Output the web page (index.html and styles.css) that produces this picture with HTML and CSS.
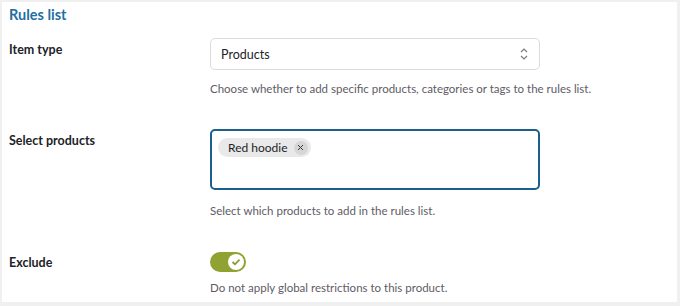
FILE: index.html
```html
<!DOCTYPE html>
<html>
<head>
<meta charset="UTF-8">
<title>Rules list</title>
<link rel="stylesheet" href="styles.css">
</head>
<body>
<div class="panel">
<h2 class="title">Rules list</h2>

<div class="row row-type">
<div class="label">Item type</div>
<div class="field">
<div class="select">
<span>Products</span>
<svg class="arrows" width="10" height="14" viewBox="0 0 10 14"><path d="M2 5 L5 2 L8 5 M2 9 L5 12 L8 9" fill="none" stroke="#7a7a7a" stroke-width="1.2"/></svg>
</div>
<p class="desc">Choose whether to add specific products, categories or tags to the rules list.</p>
</div>
</div>

<div class="row row-products">
<div class="label">Select products</div>
<div class="field">
<div class="multi">
<span class="chip">Red hoodie <span class="chip-x"><svg width="7" height="7" viewBox="0 0 7 7"><path d="M1 1 L6 6 M6 1 L1 6" stroke="#3a3a3a" stroke-width="1"/></svg></span></span>
</div>
<p class="desc">Select which products to add in the rules list.</p>
</div>
</div>

<div class="row row-exclude">
<div class="label">Exclude</div>
<div class="field">
<div class="toggle"><span class="knob"><svg width="10" height="8" viewBox="0 0 10 8"><path d="M1.5 4 L4 6.3 L8.5 1.7" fill="none" stroke="#8a9b2e" stroke-width="1.8"/></svg></span></div>
<p class="desc">Do not apply global restrictions to this product.</p>
</div>
</div>
</div>
</body>
</html>
```
FILE: styles.css
```css
html, body{
    margin:0;
    padding:0;
}
body{
    background:#f0f0f1;
    font-family:Lato, "Noto Sans", sans-serif;
    color:#1d2327;
    width:680px;
    height:306px;
    overflow:hidden;
}
.panel{
    background:#fff;
    margin:2px 0 0 2px;
    width:675px;
    height:300px;
    box-sizing:border-box;
    padding:3px 7px 0 7px;
}
.title{
    margin:0;
    font-size:14.5px;
    font-weight:700;
    color:#1f6fa3;
    line-height:20px;
}
.row{
    display:flex;
}
.label{
    width:201px;
    font-size:12.5px;
    font-weight:700;
    line-height:18px;
}
.field{
    width:330px;
}
.row-type{
    margin-top:13px;
}
.row-type .label{
    margin-top:3px;
}
.select{
    height:32px;
    border:1px solid #dcdcde;
    border-radius:5px;
    box-sizing:border-box;
    display:flex;
    align-items:center;
    justify-content:space-between;
    padding:0 10px 0 10px;
    font-size:12.5px;
}
.desc{
    margin:10px 0 0 0;
    font-size:11.5px;
    line-height:17px;
    color:#615b66;
    white-space:nowrap;
}
.row-products{
    margin-top:32px;
}
.row-products .label{
    margin-top:3px;
}
.multi{
    height:61px;
    border:2px solid #1b5f8c;
    border-radius:5px;
    box-sizing:border-box;
    padding:5px 6px;
}
.chip{
    display:inline-flex;
    align-items:center;
    height:19px;
    background:#e9e9ea;
    border-radius:10px;
    padding:0 3px 0 10px;
    font-size:12px;
    color:#1d2327;
}
.chip-x{
    display:inline-flex;
    align-items:center;
    justify-content:center;
    width:14px;
    height:14px;
    border-radius:50%;
    background:#d6d6d8;
    margin-left:6px;
}
.row-products .desc{
    margin-top:12px;
}
.row-exclude{
    margin-top:33px;
}
.row-exclude .label{
    margin-top:2px;
}
.toggle{
    width:36px;
    height:20px;
    border-radius:10px;
    background:#8fa232;
    display:flex;
    align-items:center;
    justify-content:flex-end;
    padding:0 2px;
    box-sizing:border-box;
}
.knob{
    width:16px;
    height:16px;
    border-radius:50%;
    background:#fff;
    display:flex;
    align-items:center;
    justify-content:center;
}
.row-exclude .desc{
    margin-top:7px;
}
```
